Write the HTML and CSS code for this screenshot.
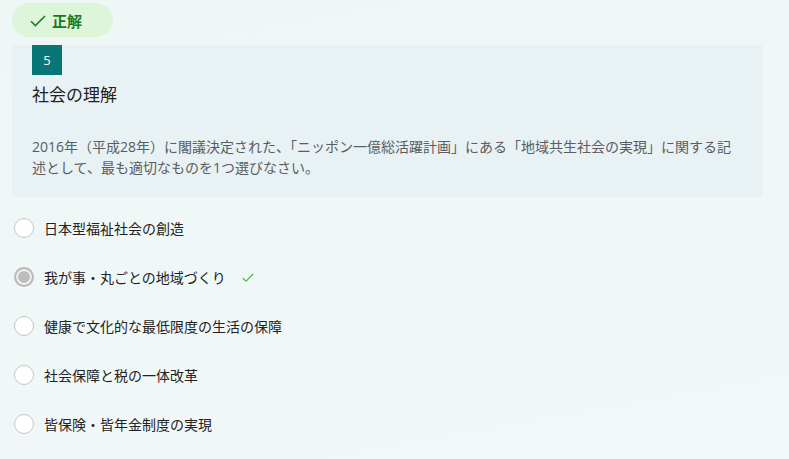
FILE: index.html
```html
<!DOCTYPE html>
<html>
<head>
    <meta charset="UTF-8">
    <title>社会の理解</title>
    <link rel="stylesheet" href="styles.css">
</head>
<body>
    <div class="result-badge">
        <svg class="badge-check" width="16" height="12" viewBox="0 0 16 12">
            <path d="M1 6.2 L5.4 10.6 L15 1" fill="none" stroke="#1e7b22" stroke-width="1.6"/>
        </svg>
        <span>正解</span>
    </div>
    <div class="question-card">
        <div class="question-number">5</div>
        <div class="question-category">社会の理解</div>
        <div class="question-text">2016年（平成28年）に閣議決定された、「ニッポン一億総活躍計画」にある「地域共生社会の実現」に関する記述として、最も適切なものを1つ選びなさい。</div>
    </div>
    <ul class="option-list">
        <li class="option">
            <span class="radio"></span>
            <span class="option-label">日本型福祉社会の創造</span>
        </li>
        <li class="option">
            <span class="radio checked"></span>
            <span class="option-label">我が事・丸ごとの地域づくり</span>
            <svg class="correct-mark" width="12" height="10" viewBox="0 0 12 10">
                <path d="M0.8 5 L4 8.2 L11.2 1" fill="none" stroke="#4cbb4c" stroke-width="1.2"/>
            </svg>
        </li>
        <li class="option">
            <span class="radio"></span>
            <span class="option-label">健康で文化的な最低限度の生活の保障</span>
        </li>
        <li class="option">
            <span class="radio"></span>
            <span class="option-label">社会保障と税の一体改革</span>
        </li>
        <li class="option">
            <span class="radio"></span>
            <span class="option-label">皆保険・皆年金制度の実現</span>
        </li>
    </ul>
</body>
</html>
```

FILE: styles.css
```css
body {
    margin: 0;
    padding: 3px 27px 0 12px;
    height: 459px;
    box-sizing: border-box;
    font-family: "Open Sans", "Noto Sans CJK JP", sans-serif;
    background: linear-gradient(170deg, #eef6f6 0%, #f0f7f7 60%, #f3f8f9 100%);
    color: #222;
    overflow: hidden;
}
.result-badge {
    display: flex;
    align-items: center;
    gap: 6px;
    width: 101px;
    height: 34px;
    box-sizing: border-box;
    padding-left: 18px;
    border-radius: 17px;
    background-color: #ddf5d9;
    color: #1b7a1f;
    font-size: 15px;
    font-weight: bold;
}
.badge-check {
    margin-top: 1px;
}
.question-card {
    margin-top: 8px;
    padding: 0 20px 19px;
    background-color: #e8f1f4;
}
.question-number {
    width: 30px;
    height: 30px;
    display: flex;
    justify-content: center;
    align-items: center;
    background-color: #087576;
    color: white;
    font-size: 13px;
}
.question-category {
    margin-top: 8px;
    font-size: 17px;
    line-height: 24px;
    color: #222;
}
.question-text {
    margin-top: 29px;
    font-size: 14px;
    line-height: 21px;
    color: #5c5c5c;
}
.option-list {
    list-style-type: none;
    margin: 0;
    padding: 6px 0 0 2px;
}
.option {
    display: flex;
    align-items: center;
    height: 49px;
    font-size: 14px;
    color: #222;
}
.radio {
    width: 20px;
    height: 20px;
    box-sizing: border-box;
    border: 1px solid #c6c6c6;
    border-radius: 50%;
    background-color: white;
    margin-right: 10px;
}
.radio.checked {
    border: 2px solid #b9b9b9;
    background-color: #bdbdbd;
    box-shadow: inset 0 0 0 2px #f2f2f2;
}
.correct-mark {
    margin-left: 16px;
    margin-top: 2px;
}
```
